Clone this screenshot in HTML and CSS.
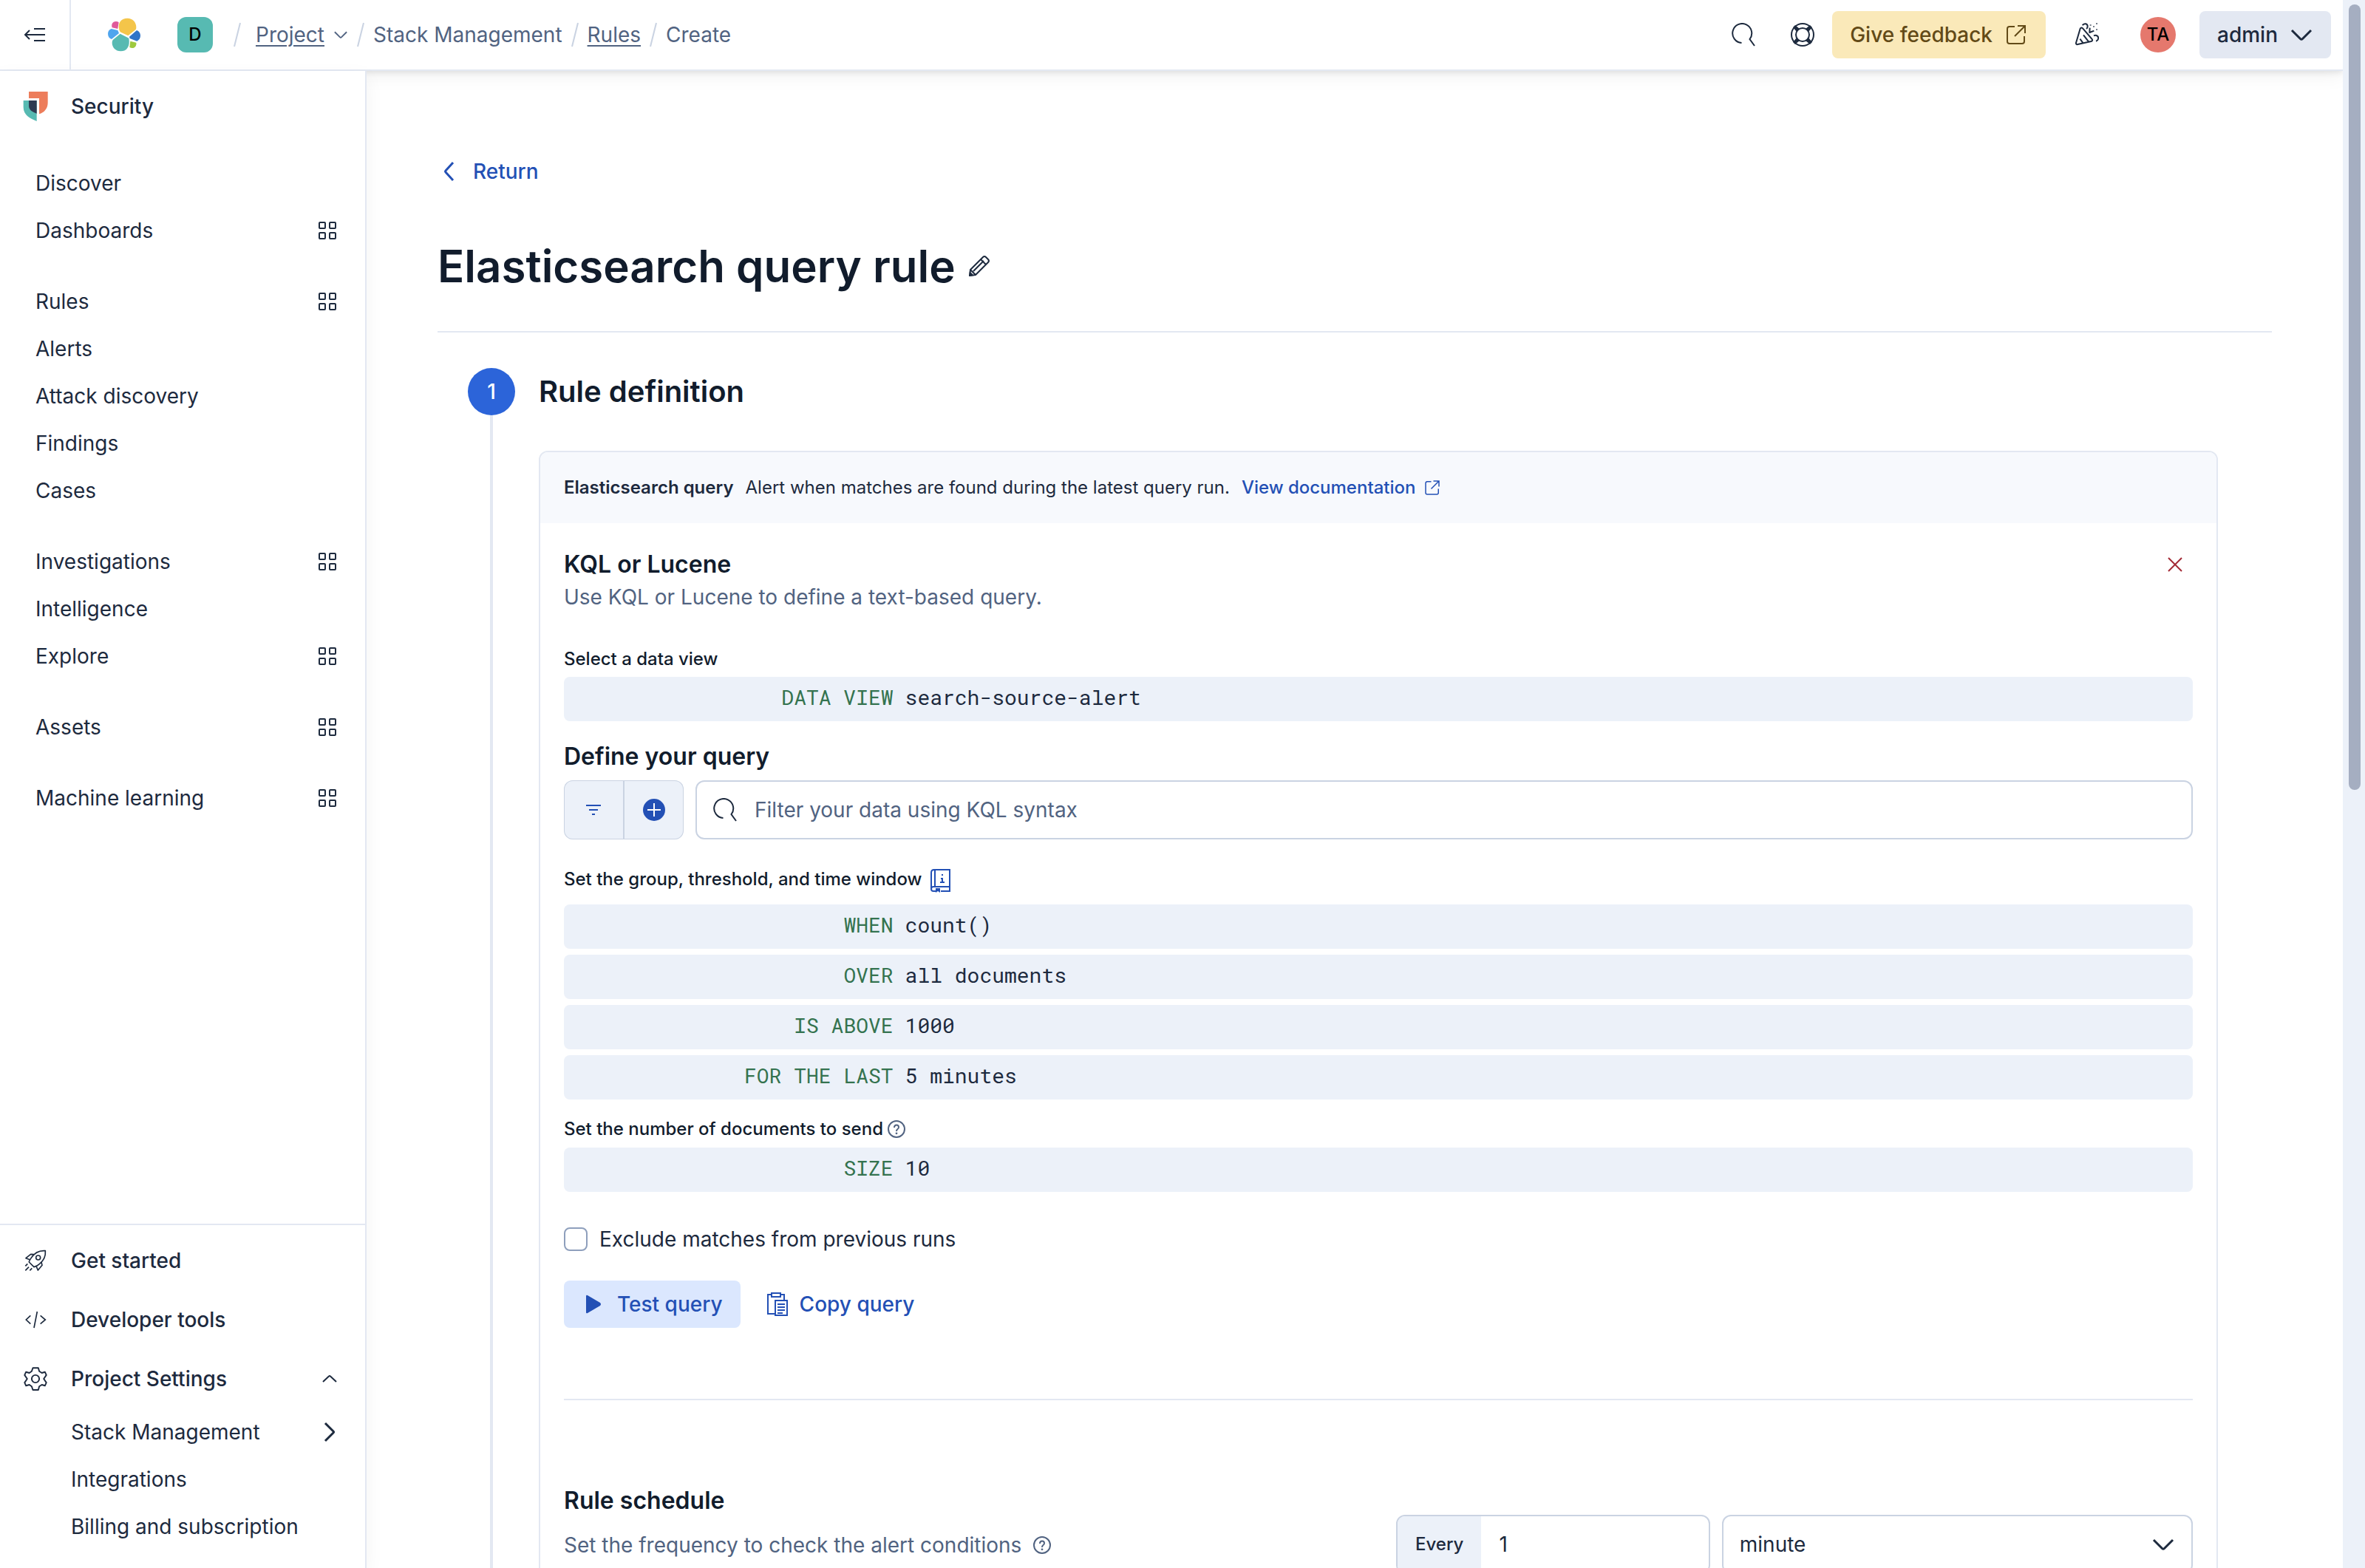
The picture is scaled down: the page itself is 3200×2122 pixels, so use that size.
FILE: index.html
```html
<!DOCTYPE html>
<html lang="en">
<head>
<meta charset="utf-8">
<title>Elasticsearch query rule</title>
<link rel="stylesheet" href="styles.css">
</head>
<body>
<svg class="sprite" aria-hidden="true">
  <symbol id="grid" viewBox="0 0 24 24"><g fill="none" stroke="currentColor" stroke-width="2"><rect x="1" y="1" width="8" height="8" rx="1"/><rect x="15" y="1" width="8" height="8" rx="1"/><rect x="1" y="15" width="8" height="8" rx="1"/><rect x="15" y="15" width="8" height="8" rx="1"/></g></symbol>
  <symbol id="search" viewBox="0 0 32 32"><path d="M13.500 27A13 13 0 1 1 24.500 22L31 31" fill="none" stroke="currentColor" stroke-width="2"/></symbol>
  <symbol id="popout" viewBox="0 0 32 32"><path d="M14 5H7Q4 5 4 8V25Q4 28 7 28H24Q27 28 27 25V18M18 4H28V14M28 4L14 18" fill="none" stroke="currentColor" stroke-width="2"/></symbol>
  <symbol id="down" viewBox="0 0 32 32"><path d="M3 10L14.500 21.500Q16 23 17.500 21.500L29 10" fill="none" stroke="currentColor" stroke-width="3"/></symbol>
  <symbol id="question" viewBox="0 0 24 24"><g fill="none" stroke="currentColor" stroke-width="2"><circle cx="12" cy="12" r="11"/><path d="M9 10Q9 6.500 12 6.500T15 9.500Q15 11 13.500 12T12 15"/></g><circle cx="12" cy="17.800" r="1.400" fill="currentColor"/></symbol>
  <symbol id="slash" viewBox="0 0 10 34"><path d="M9 1L1 33" fill="none" stroke="#cad3e2" stroke-width="2"/></symbol>
</svg>
<div class="app">
  <header class="header">
    <button class="collapse" aria-label="Collapse navigation"><svg width="32" height="32" viewBox="0 0 32 32"><path d="M15 8H30M3 16H30M15 24H30M9 10L3 16L9 22" fill="none" stroke="currentColor" stroke-width="2"/></svg></button>
    <a class="brand" href="#" aria-label="Elastic home"><svg width="48" height="48" viewBox="372 39 144 144">
      <path fill="#f4c54a" d="M424 91C416 60 434 44 457 44C478 44 493 60 493 81Q493 87 491 90L460 115L428 100Z"/>
      <path fill="#57bab2" d="M428 107L463 125C469 157 455 178 430 178C409 178 395 162 395 144Q395 137 398 132Z"/>
      <path fill="#4fa5ee" d="M392 87C383 90 378 98 378 107C378 118 384 126 393 129L423 105L418 93Z"/>
      <path fill="#e05a9a" d="M394 78C392 66 399 57 410 57Q418 57 422 61L418 87L395 82Z"/>
      <path fill="#3074c8" d="M495 93C504 96 510 104 510 115C510 125 505 133 496 137L467 126L465 119Z"/>
      <path fill="#9ec93f" d="M469 137L493 143C495 155 488 165 477 165Q471 165 466 162Z"/>
    </svg></a>
    <span class="space-avatar">D</span>
    <nav class="crumbs" aria-label="Breadcrumbs">
      <svg class="sep first"><use href="#slash"/></svg>
      <a href="#">Project</a>
      <svg class="crumb-down" width="20" height="20"><use href="#down"/></svg>
      <svg class="sep"><use href="#slash"/></svg>
      <span>Stack Management</span>
      <svg class="sep"><use href="#slash"/></svg>
      <a href="#">Rules</a>
      <svg class="sep"><use href="#slash"/></svg>
      <span>Create</span>
    </nav>
    <div class="header-actions">
      <button class="icon-btn" aria-label="Search"><svg width="32" height="32"><use href="#search"/></svg></button>
      <button class="icon-btn" aria-label="Help"><svg width="32" height="32" viewBox="0 0 32 32"><g fill="none" stroke="currentColor" stroke-width="2"><circle cx="16" cy="16" r="15"/><circle cx="16" cy="16" r="9"/></g><path d="M6 3L12 8L8 12L3 6ZM26 3L20 8L24 12L29 6ZM6 29L12 24L8 20L3 26ZM26 29L20 24L24 20L29 26Z" fill="currentColor"/></svg></button>
      <button class="feedback">Give feedback <svg width="32" height="32"><use href="#popout"/></svg></button>
      <button class="icon-btn gap-before" aria-label="What's new"><svg width="32" height="32" viewBox="54 63 96 96"><g fill="none" stroke="currentColor" stroke-width="6" stroke-linejoin="round"><path d="M74 86L57 144Q56 152 64 150L118 138Q127 135 121 128L85 86Q78 79 74 86ZM73 128L86 145M87 112L108 139M83 73C90 62 104 66 104 77Q104 83 99 87M129 115C140 110 150 118 147 128Q145 135 138 137M113 83L112 102L130 95"/></g><path d="M113 69h6v6h-6zM138 63h6v6h-6zM126 75h6v6h-6zM138 87h6v6h-6z" fill="currentColor" opacity=".6"/></svg></button>
      <button class="icon-btn gap-before" aria-label="Account"><span class="user-avatar">TA</span></button>
      <button class="admin">admin <svg width="32" height="32"><use href="#down"/></svg></button>
    </div>
  </header>
  <div class="below">
    <aside class="sidebar">
      <a class="solution" href="#"><svg width="36" height="42" viewBox="30 339 108 126"><path fill="#ed7d5b" d="M57 342H134V388C134 412 118 428 99 433V369H57Z"/><path fill="#57bab2" d="M35 378H89V462C62 450 35 438 35 405Z"/><path fill="#2f3b52" d="M57 378H89V431C70 425 57 416 57 400Z"/></svg>Security</a>
      <nav class="nav" aria-label="Security">
        <ul>
          <li><a href="#">Discover</a></li>
          <li><a href="#">Dashboards <svg width="24" height="24"><use href="#grid"/></svg></a></li>
        </ul>
        <ul>
          <li><a href="#">Rules <svg width="24" height="24"><use href="#grid"/></svg></a></li>
          <li><a href="#">Alerts</a></li>
          <li><a href="#">Attack discovery</a></li>
          <li><a href="#">Findings</a></li>
          <li><a href="#">Cases</a></li>
        </ul>
        <ul>
          <li><a href="#">Investigations <svg width="24" height="24"><use href="#grid"/></svg></a></li>
          <li><a href="#">Intelligence</a></li>
          <li><a href="#">Explore <svg width="24" height="24"><use href="#grid"/></svg></a></li>
        </ul>
        <ul>
          <li><a href="#">Assets <svg width="24" height="24"><use href="#grid"/></svg></a></li>
        </ul>
        <ul>
          <li><a href="#">Machine learning <svg width="24" height="24"><use href="#grid"/></svg></a></li>
        </ul>
      </nav>
      <nav class="nav-footer" aria-label="Project">
        <a class="foot-item" href="#"><svg width="32" height="32" viewBox="96 210 96 96"><path d="M184 218C160 216 140 226 126 248Q118 260 118 264L138 284Q150 281 160 272C180 256 186 238 184 218ZM137 233L125 232L105 248L121 254M168 264L171 277L154 297L148 283M103 280L112 271M103 298L117 284M121 298L130 289" fill="none" stroke="currentColor" stroke-width="5" stroke-linejoin="round"/><circle cx="155" cy="246" r="9" fill="none" stroke="currentColor" stroke-width="5"/></svg>Get started</a>
        <a class="foot-item" href="#"><svg width="32" height="32" viewBox="96 450 96 96"><path d="M124 481L106 498L124 515M164 481L184 498L164 515M151 465L138 531" fill="none" stroke="currentColor" stroke-width="5"/></svg>Developer tools</a>
        <a class="foot-item" href="#"><svg width="32" height="32" viewBox="94 688 100 100"><path d="M133 692H156L160 706L171 713L184 709L190 722L179 738L190 754L184 767L171 763L160 770L156 785H133L128 770L118 763L104 767L98 754L109 738L98 722L104 709L118 713L128 706Z" fill="none" stroke="currentColor" stroke-width="6" stroke-linejoin="round"/><circle cx="144" cy="738" r="16" fill="none" stroke="currentColor" stroke-width="6"/></svg>Project Settings<svg class="end" width="20" height="20" viewBox="0 0 20 20"><path d="M1 14L9 6.500Q10 5.500 11 6.500L19 14" fill="none" stroke="currentColor" stroke-width="2"/></svg></a>
        <a class="foot-sub" href="#">Stack Management<svg class="end" width="20" height="32" viewBox="0 0 20 32"><path d="M4 4L15 15Q16 16 15 17L4 28" fill="none" stroke="currentColor" stroke-width="3"/></svg></a>
        <a class="foot-sub" href="#">Integrations</a>
        <a class="foot-sub" href="#">Billing and subscription</a>
      </nav>
    </aside>
    <main class="main">
      <a class="return" href="#"><svg width="32" height="32" viewBox="0 0 32 32"><path d="M21 4L11 15Q10 16 11 17L21 28" fill="none" stroke="currentColor" stroke-width="3"/></svg>Return</a>
      <div class="title-row">
        <h1>Elasticsearch query rule</h1>
        <button class="edit" aria-label="Edit name"><svg width="32" height="32" viewBox="0 0 32 32"><path d="M3 29L4 21L21 4Q23 2 25 4L28 7Q30 9 28 11L11 28ZM18 7L25 14M4 21L11 28M8 23L22 9" fill="none" stroke="currentColor" stroke-width="2" stroke-linejoin="round"/><path d="M2 30L3 23L9 29Z" fill="currentColor"/></svg></button>
      </div>
      <hr class="rule">
      <section class="step">
        <div class="step-rail"><span class="step-num">1</span></div>
        <div class="step-body">
          <h2>Rule definition</h2>
          <div class="card">
            <div class="card-head">
              <strong>Elasticsearch query</strong>
              <span>Alert when matches are found during the latest query run.</span>
              <a href="#">View documentation <svg width="24" height="24"><use href="#popout"/></svg></a>
            </div>
            <div class="card-body">
              <div class="type-row">
                <div>
                  <h3>KQL or Lucene</h3>
                  <p class="muted">Use KQL or Lucene to define a text-based query.</p>
                </div>
                <button class="close" aria-label="Remove"><svg width="20" height="20" viewBox="0 0 20 20"><path d="M1 1L19 19M19 1L1 19" fill="none" stroke="currentColor" stroke-width="2"/></svg></button>
              </div>
              <h4 class="label view-label">Select a data view</h4>
              <button class="expr"><span>DATA VIEW</span><b>search-source-alert</b></button>
              <h3 class="define">Define your query</h3>
              <div class="query-row">
                <div class="filter-group">
                  <button aria-label="Saved queries"><svg width="24" height="24" viewBox="0 0 24 24"><path d="M2 6H22M6 12H18M10 18H14" fill="none" stroke="currentColor" stroke-width="2"/></svg></button>
                  <button aria-label="Add filter"><svg width="32" height="32" viewBox="0 0 32 32"><circle cx="16" cy="16" r="15" fill="currentColor"/><path d="M7 16H25M16 7V25" stroke="#fff" stroke-width="2"/></svg></button>
                </div>
                <label class="search"><svg width="32" height="32"><use href="#search"/></svg><input type="text" aria-label="Query" placeholder="Filter your data using KQL syntax"></label>
              </div>
              <h4 class="label group-label">Set the group, threshold, and time window
                <button class="book" aria-label="Help"><svg width="32" height="32" viewBox="0 0 32 32"><path d="M9 30H6Q3 30 3 27V5Q3 1 7 1H28V24H6Q3 24 3 27M8 1V24M16 30H28V24" fill="none" stroke="currentColor" stroke-width="2"/><path d="M9 26H15V32L12 30L9 32ZM17 7h2v2h-2zM16 12h3v5h2v2h-6v-2h2v-3h-1z" fill="currentColor"/></svg></button>
              </h4>
              <div class="expr-list">
                <button class="expr"><span>WHEN</span><b>count()</b></button>
                <button class="expr"><span>OVER</span><b>all documents</b></button>
                <button class="expr"><span>IS ABOVE</span><b>1000</b></button>
                <button class="expr"><span>FOR THE LAST</span><b>5 minutes</b></button>
              </div>
              <h4 class="label size-label">Set the number of documents to send<svg width="24" height="24"><use href="#question"/></svg></h4>
              <button class="expr"><span>SIZE</span><b>10</b></button>
              <label class="check"><input type="checkbox">Exclude matches from previous runs</label>
              <div class="actions">
                <button class="test"><svg width="32" height="32" viewBox="0 0 32 32"><path d="M6 5Q6 3 8 4L25 14Q27 16 25 18L8 28Q6 29 6 27Z" fill="currentColor"/></svg>Test query</button>
                <button class="copy"><svg width="32" height="32" viewBox="0 0 32 32"><path d="M12 29H3V3H8M20 3H25V10M8 1H20V6H8ZM13 11H29V31H13ZM16 16H26M16 20H26M16 24H26M16 28H23" fill="none" stroke="currentColor" stroke-width="2"/></svg>Copy query</button>
              </div>
              <hr class="divider">
              <div class="schedule">
                <div>
                  <h3>Rule schedule</h3>
                  <p class="muted">Set the frequency to check the alert conditions <svg width="24" height="24"><use href="#question"/></svg></p>
                </div>
                <div class="interval">
                  <label class="every"><span>Every</span><input type="text" value="1"></label>
                  <div class="unit"><select aria-label="Unit"><option>minute</option></select><svg width="32" height="32"><use href="#down"/></svg></div>
                </div>
              </div>
            </div>
          </div>
        </div>
      </section>
    </main>
  </div>
</div>
<div class="scrollbar"><div class="thumb"></div></div>
</body>
</html>
```
FILE: styles.css
```css
* { box-sizing: border-box; }
body {
  margin: 0;
  display: flex;
  height: 100vh;
  overflow: hidden;
  font: 400 28px/40px Inter, sans-serif;
  color: #1d2a3e;
  background: #fff;
}
h1, h2, h3, h4, p, ul { margin: 0; padding: 0; }
ul { list-style: none; }
a { color: inherit; text-decoration: none; }
button {
  font: inherit;
  color: inherit;
  background: none;
  border: 0;
  margin: 0;
  padding: 0;
}
svg { display: block; flex: none; }
.sprite { display: none; }

.app { flex: 1; min-width: 0; display: flex; flex-direction: column; overflow: hidden; }
.scrollbar { width: 30px; padding: 6px 6px 6px 8px; background: #ecf1f9; }
.thumb { height: 50.4%; border-radius: 8px; background: #a5aec1; }

/* Header */
.header {
  flex: none;
  display: flex;
  align-items: center;
  height: 96px;
  border-bottom: 2px solid #e3e8f2;
  padding-right: 16px;
  background: #fff;
  position: relative;
  box-shadow: 0 2px 8px rgba(0, 0, 0, .1), 0 8px 24px rgba(0, 0, 0, .05);
}
.collapse {
  width: 96px;
  align-self: stretch;
  display: grid;
  place-items: center;
  border-right: 2px solid #e3e8f2;
}
.brand { margin: 0 48px; }
.space-avatar {
  width: 48px;
  height: 48px;
  border-radius: 12px;
  background: #57bab2;
  color: #000;
  font-size: 24px;
  font-weight: 500;
  line-height: 48px;
  text-align: center;
}
.crumbs { display: flex; align-items: center; gap: 12px; margin-left: 28px; color: #516381; }
.crumbs a { text-decoration: underline; text-underline-offset: 4px; }
.sep { width: 10px; height: 34px; }
.sep.first { margin-right: 8px; }
.header-actions { display: flex; align-items: center; margin-left: auto; }
.icon-btn { width: 80px; height: 80px; display: grid; place-items: center; }
.gap-before { margin-left: 16px; }
.feedback, .admin {
  display: flex;
  align-items: center;
  height: 64px;
  border-radius: 8px;
  padding: 0 24px;
  font-weight: 500;
}
.feedback { gap: 16px; background: #fae9b9; color: #624a17; }
.admin { gap: 16px; margin-left: 16px; background: #e3e8f2; }
.user-avatar {
  width: 48px;
  height: 48px;
  border-radius: 50%;
  background: #e5786d;
  color: #000;
  font-size: 24px;
  font-weight: 500;
  line-height: 48px;
}

/* Sidebar */
.below { flex: 1; min-height: 0; display: flex; }
.sidebar {
  flex: none;
  width: 496px;
  display: flex;
  flex-direction: column;
  position: relative;
  border-right: 2px solid #e3e8f2;
  background: #fff;
  box-shadow: 0 8px 24px rgba(0, 0, 0, .05);
}
.solution { display: flex; align-items: center; gap: 30px; height: 96px; padding-left: 30px; font-weight: 500; }
.nav { flex: 1; display: flex; flex-direction: column; gap: 32px; padding: 24px 39px 0 48px; }
.nav a { display: flex; align-items: center; justify-content: space-between; height: 64px; }
.nav-footer { border-top: 2px solid #e3e8f2; padding: 8px 38px 24px 32px; }
.foot-item, .foot-sub { display: flex; align-items: center; }
.foot-item { height: 80px; gap: 32px; font-weight: 500; }
.foot-sub { height: 64px; padding-left: 64px; }
.end { margin-left: auto; }

/* Main */
.main { flex: 1; min-width: 0; overflow: hidden; padding: 112px 96px 0; }
.return {
  display: inline-flex;
  align-items: center;
  gap: 16px;
  height: 48px;
  vertical-align: top;
  color: #2350b5;
  font-weight: 500;
}
.title-row { display: flex; align-items: center; gap: 16px; margin-top: 64px; }
h1, h2, h3 { color: #111c2c; font-weight: 600; }
h1 { font-size: 60px; line-height: 80px; }
h2 { font-size: 40px; line-height: 64px; }
h3 { font-size: 32px; line-height: 48px; }
hr { height: 2px; margin: 0; border: 0; background: #e3e8f2; }
.rule { margin: 48px 0; }
.step { display: grid; grid-template-columns: 64px 1fr; gap: 32px; padding: 0 73px 0 41px; }
.step-rail { display: flex; flex-direction: column; align-items: center; }
.step-rail::after { content: ""; flex: 1; width: 4px; background: #e3e8f2; }
.step-num {
  width: 64px;
  height: 64px;
  border-radius: 50%;
  background: #2c64d9;
  color: #fff;
  font-weight: 500;
  line-height: 64px;
  text-align: center;
}
.step-body { min-width: 0; }
.card { margin-top: 48px; border: 2px solid #e3e8f2; border-radius: 12px; overflow: hidden; }
.card-head {
  display: flex;
  align-items: center;
  gap: 16px;
  height: 96px;
  padding: 0 32px;
  background: #f7f9fd;
  font-size: 24px;
}
.card-head strong { font-weight: 600; }
.card-head a { display: flex; align-items: center; gap: 11px; color: #2350b5; font-weight: 500; }
.card-body { padding: 32px; }
.type-row { display: flex; justify-content: space-between; align-items: flex-start; }
.muted { display: flex; align-items: center; gap: 16px; color: #516381; }
.close { width: 48px; height: 48px; display: grid; place-items: center; color: #a32a35; }
.label { color: #111c2c; font-size: 24px; font-weight: 500; line-height: 32px; }
.view-label { margin: 48px 0 8px; }
.expr {
  display: flex;
  align-items: center;
  gap: 16px;
  width: 100%;
  height: 60px;
  padding: 0 8px 4px;
  border-radius: 8px;
  background: #ecf1f9;
  font: 400 28px/40px "Roboto Mono", "Liberation Mono", monospace;
  text-align: left;
}
.expr span { flex: 0 0 20%; text-align: right; color: #34734f; }
.expr b { font-weight: 400; }
.define { margin: 24px 0 8px; }
.query-row { display: flex; gap: 16px; }
.filter-group {
  display: grid;
  grid-template-columns: 80px 82px;
  height: 80px;
  box-shadow: inset 0 0 0 1px #cad3e2;
  border-radius: 12px;
  background: #ecf1f9;
  color: #2350b5;
}
.filter-group button { display: grid; place-items: center; }
.filter-group button + button { border-left: 2px solid #cad3e2; }
.search {
  flex: 1;
  display: flex;
  align-items: center;
  gap: 24px;
  height: 80px;
  padding: 0 22px;
  border: 2px solid #cad3e2;
  border-radius: 12px;
}
input, select { font: inherit; color: inherit; margin: 0; background: none; }
.search input { flex: 1; border: 0; padding: 0; }
.search input::placeholder { color: #516381; opacity: 1; }
.group-label { display: flex; align-items: flex-end; gap: 10px; margin: 36px 0 16px; line-height: 36px; }
.book { color: #2350b5; }
.expr-list { display: grid; gap: 8px; }
.size-label { display: flex; align-items: center; gap: 6px; margin: 24px 0 9px; }
.size-label svg, .muted svg { color: #516381; }
.check { display: flex; align-items: center; gap: 16px; height: 32px; margin: 48px 0 40px; }
.check input {
  appearance: none;
  width: 32px;
  height: 32px;
  border: 2px solid #8e9fbc;
  border-radius: 8px;
  background: #fff;
}
.actions { display: flex; gap: 34px; }
.test, .copy {
  display: flex;
  align-items: center;
  gap: 16px;
  height: 64px;
  border-radius: 8px;
  color: #2350b5;
  font-weight: 500;
}
.test { padding: 0 24px; background: #dbe7fe; }
.copy { gap: 14px; }
.divider { margin: 96px 0 112px; }
.schedule { display: grid; grid-template-columns: 1fr 1fr; gap: 48px; align-items: start; }
.schedule .muted { margin-top: 16px; }
.interval { display: grid; grid-template-columns: 2fr 3fr; gap: 16px; margin-top: 43px; }
.every, .unit { display: flex; height: 80px; min-width: 0; border: 2px solid #cad3e2; border-radius: 12px; overflow: hidden; }
.every span { padding: 0 24px; background: #ecf1f9; font-size: 24px; font-weight: 500; line-height: 76px; }
.every input { flex: 1; min-width: 0; border: 0; padding: 0 24px; }
.unit { display: grid; align-items: center; }
.unit select { grid-area: 1 / 1; width: 100%; height: 100%; appearance: none; border: 0; padding: 0 22px; }
.unit svg { grid-area: 1 / 1; justify-self: end; margin-right: 22px; pointer-events: none; }
```
